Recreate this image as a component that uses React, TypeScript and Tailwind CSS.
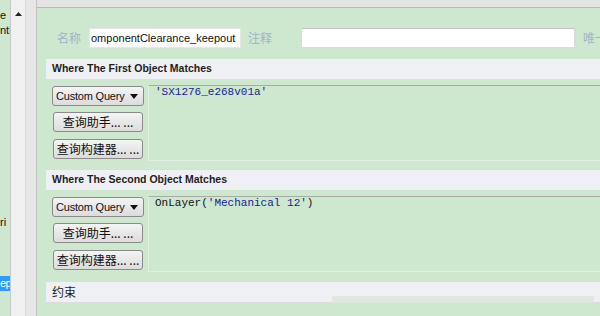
import React from "react";

const ui = { fontFamily: '"Liberation Sans", "Noto Sans CJK SC", sans-serif' };
const cjk = { fontFamily: '"Noto Sans CJK SC", "Liberation Sans", sans-serif' };
const mono = { fontFamily: '"Liberation Mono", monospace' };

function Header({ title, cn }: { title: string; cn?: boolean }) {
  return (
    <div
      className={`h-[20px] bg-[#eff0f4] flex items-center pl-[6px] text-[#1e1e1e] ${cn ? "text-[12px]" : "text-[10.5px] font-bold"}`}
      style={cn ? cjk : ui}
    >
      {title}
    </div>
  );
}

function Btn({ label }: { label: string }) {
  return (
    <div
      className="w-[90px] h-[20px] ml-[1px] rounded-[3px] border border-[#8a8a8a] bg-gradient-to-b from-[#f4f4f4] to-[#dcdcdc] flex items-center justify-center text-[12px] text-[#111] leading-none"
      style={cjk}
    >
      {label}
    </div>
  );
}

function Dropdown() {
  return (
    <div
      className="w-[92px] h-[20px] rounded-[3px] border border-[#8a8a8a] bg-gradient-to-b from-[#f4f4f4] to-[#dcdcdc] flex items-center justify-between pl-[3px] pr-[5px] text-[11px] tracking-[-0.2px] text-[#111]"
      style={ui}
    >
      <span>Custom Query</span>
      <svg width="8" height="5" viewBox="0 0 8 5">
        <path d="M0 0 L8 0 L4 5 Z" fill="#111" />
      </svg>
    </div>
  );
}

function Section({ code }: { code: React.ReactNode }) {
  return (
    <div className="flex h-[76px] mt-[6px]">
      <div className="flex flex-col w-[102px] shrink-0 pl-[6px] pt-[1px]">
        <Dropdown />
        <div className="mt-[6px]">
          <Btn label="查询助手... ..." />
        </div>
        <div className="mt-[7px]">
          <Btn label="查询构建器... ..." />
        </div>
      </div>
      <div className="flex-1 border-t border-t-[#a8aca8] border-l border-b border-l-[#e2eee2] border-b-[#e2eee2] pl-[6px] text-[11px] leading-[13px]" style={mono}>
        {code}
      </div>
    </div>
  );
}

export default function App() {
  return (
    <div className="w-[600px] h-[316px] flex overflow-hidden bg-[#cde8cf] relative" style={ui}>
      {/* left tree fragment */}
      <div className="w-[10px] shrink-0 flex flex-col text-[11px] text-[#111] overflow-hidden">
        <div className="h-[8px]" />
        <div className="h-[15px] leading-[15px]">e</div>
        <div className="h-[15px] leading-[15px] whitespace-nowrap">ntl</div>
        <div className="h-[177px]" />
        <div className="h-[15px] leading-[15px] whitespace-nowrap">ri</div>
        <div className="h-[46px]" />
        <div className="h-[15px] leading-[15px] bg-[#3399ff] text-white whitespace-nowrap tracking-[-0.5px]">ep</div>
      </div>
      {/* scrollbar */}
      <div className="w-[16px] shrink-0 bg-[#f0f0f0] border-l border-[#c8c8c8] border-r border-r-[#dadada] flex justify-center pt-[12px]">
        <svg width="7" height="4" viewBox="0 0 7 4">
          <path d="M0 4 L3.5 0 L7 4 Z" fill="#222" />
        </svg>
      </div>
      <div className="w-[11px] shrink-0 bg-[#e6e6e6] border-r border-[#c4c4c4]" />
      {/* main */}
      <div className="flex-1 min-w-0 flex flex-col">
        <div className="h-[8px] bg-[#e3e3e3] border-b border-[#b8b8b8]" />
        <div className="pl-[9px] flex flex-col">
          {/* name row */}
          <div className="flex items-center mt-[20px] h-[20px] whitespace-nowrap">
            <span className="ml-[11px] shrink-0 text-[12px] text-[#9fb5cc] w-[32px]" style={cjk}>名称</span>
            <div className="w-[152px] shrink-0 h-[20px] bg-white border border-[#e6e6e6] flex items-center pl-[1px] text-[11px] text-[#111] overflow-hidden" style={ui}>
              omponentClearance_keepout
            </div>
            <span className="ml-[7px] shrink-0 text-[12px] text-[#9fb5cc] w-[53px]" style={cjk}>注释</span>
            <div className="w-[274px] shrink-0 h-[20px] bg-white border border-[#dcdcdc] border-t-[#c4c4c4]" />
            <span className="ml-[8px] shrink-0 text-[12px] text-[#9fb5cc]" style={cjk}>唯一</span>
          </div>
          <div className="mt-[11px]">
            <Header title="Where The First Object Matches" />
          </div>
          <Section code={<span className="text-[#1a1a96]">'SX1276_e268v01a'</span>} />
          <div className="mt-[9px]">
            <Header title="Where The Second Object Matches" />
          </div>
          <Section
            code={
              <span className="text-[#111]">
                OnLayer(<span className="text-[#1a1a96]">'Mechanical 12'</span>)
              </span>
            }
          />
          <div className="mt-[10px] border-b border-[#dcdcdc]">
            <Header title="约束" cn />
          </div>
        </div>
      </div>
      <div className="absolute left-[332px] top-[296px] w-[262px] h-[7px] bg-[#dfe7e1]" />
    </div>
  );
}
